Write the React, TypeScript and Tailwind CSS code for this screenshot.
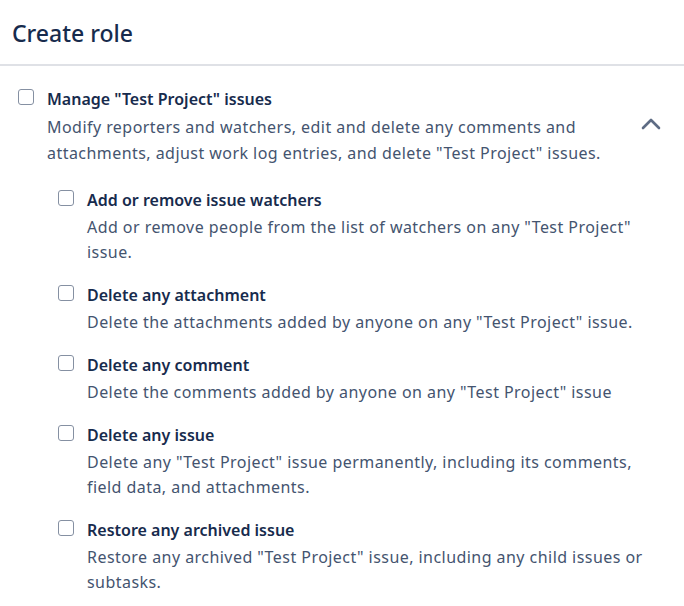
import React, { useState } from "react";

interface Permission {
  title: string;
  description: string;
}

const children: Permission[] = [
  {
    title: "Add or remove issue watchers",
    description:
      'Add or remove people from the list of watchers on any "Test Project" issue.',
  },
  {
    title: "Delete any attachment",
    description:
      'Delete the attachments added by anyone on any "Test Project" issue.',
  },
  {
    title: "Delete any comment",
    description:
      'Delete the comments added by anyone on any "Test Project" issue',
  },
  {
    title: "Delete any issue",
    description:
      'Delete any "Test Project" issue permanently, including its comments, field data, and attachments.',
  },
  {
    title: "Restore any archived issue",
    description:
      'Restore any archived "Test Project" issue, including any child issues or subtasks.',
  },
];

const Checkbox = () => (
  <span className="mt-[2px] block h-[16px] w-[16px] shrink-0 rounded-[3px] border-[1.5px] border-[#8590a2] bg-white" />
);

const App: React.FC = () => {
  const [open] = useState(true);

  return (
    <div
      className="min-h-[606px] w-[684px] bg-white text-[#172b4d]"
      style={{ fontFamily: '"Noto Sans", "Open Sans", sans-serif' }}
    >
      <div className="border-b-2 border-[#dfe1e6] px-3 pb-[14px] pt-[16px]">
        <h1 className="text-[23px] font-medium leading-[34px]">Create role</h1>
      </div>

      <div className="pl-[18px] pr-[23px] pt-[21px]">
        <div className="flex items-start gap-[13px]">
          <Checkbox />
          <div className="flex-1">
            <div className="text-[16px] font-semibold leading-6">
              Manage "Test Project" issues
            </div>
            <div className="mt-[3px] text-[16px] leading-[26px] tracking-[0.45px] text-[#44546f]">
              Modify reporters and watchers, edit and delete any comments and
              attachments, adjust work log entries, and delete "Test Project"
              issues.
            </div>
          </div>
          <svg
            className="mt-[31px] shrink-0"
            width="20"
            height="12"
            viewBox="0 0 20 12"
            fill="none"
            stroke="#5e6c84"
            strokeWidth="2.6"
            strokeLinecap="round"
            strokeLinejoin="round"
          >
            {open ? <path d="M2 10L10 2L18 10" /> : <path d="M2 2L10 10L18 2" />}
          </svg>
        </div>

        <div className="flex flex-col gap-[18px] pl-10 pt-[22px]">
          {children.map((item) => (
            <div key={item.title} className="flex items-start gap-[13px]">
              <Checkbox />
              <div className="flex-1">
                <div className="text-[16px] font-semibold leading-6">
                  {item.title}
                </div>
                <div className="mt-[3px] text-[16px] leading-[25px] tracking-[0.45px] text-[#44546f]">
                  {item.description}
                </div>
              </div>
            </div>
          ))}
        </div>
      </div>
    </div>
  );
};

export default App;
